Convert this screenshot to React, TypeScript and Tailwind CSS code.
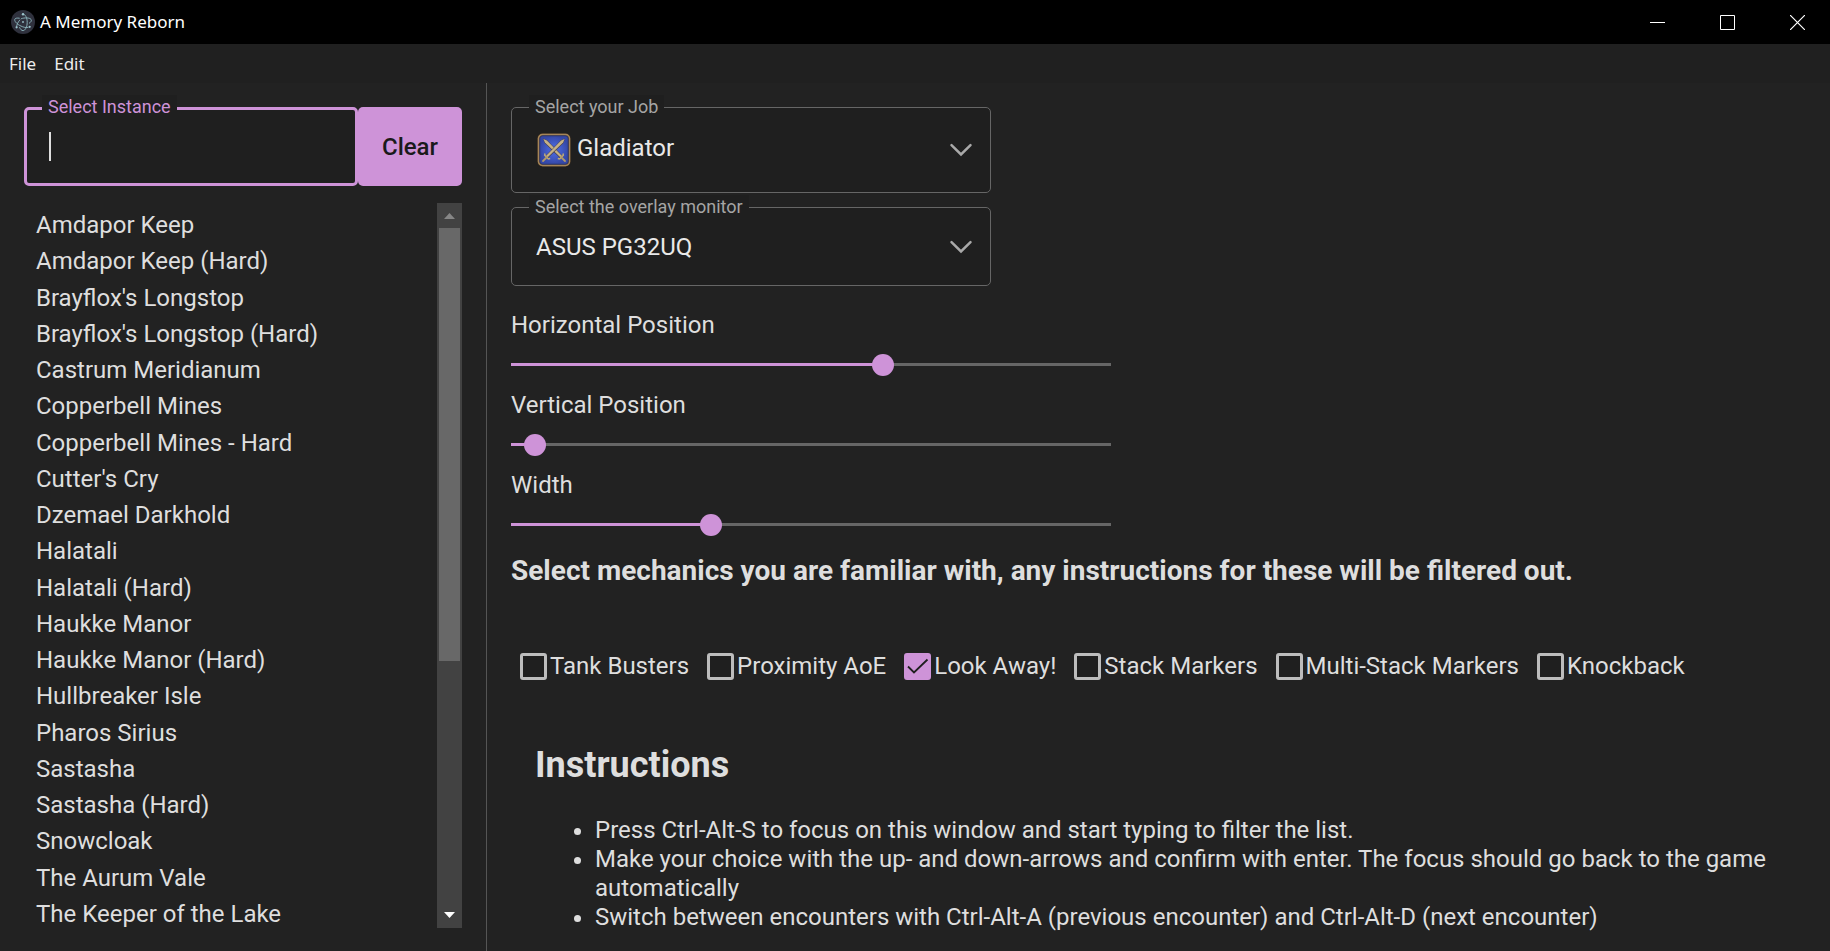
import { useState, type ReactNode } from "react";

const instances = [
  "Amdapor Keep",
  "Amdapor Keep (Hard)",
  "Brayflox's Longstop",
  "Brayflox's Longstop (Hard)",
  "Castrum Meridianum",
  "Copperbell Mines",
  "Copperbell Mines - Hard",
  "Cutter's Cry",
  "Dzemael Darkhold",
  "Halatali",
  "Halatali (Hard)",
  "Haukke Manor",
  "Haukke Manor (Hard)",
  "Hullbreaker Isle",
  "Pharos Sirius",
  "Sastasha",
  "Sastasha (Hard)",
  "Snowcloak",
  "The Aurum Vale",
  "The Keeper of the Lake",
];

const mechanics = [
  { name: "Tank Busters", known: false },
  { name: "Proximity AoE", known: false },
  { name: "Look Away!", known: true },
  { name: "Stack Markers", known: false },
  { name: "Multi-Stack Markers", known: false },
  { name: "Knockback", known: false },
];

function ElectronIcon() {
  return (
    <svg viewBox="0 0 24 24" className="size-6 shrink-0" aria-hidden="true">
      <circle cx="12" cy="12" r="12" fill="#2f313d" />
      <g fill="none" stroke="#8fb8c0" strokeWidth="0.9" strokeLinecap="round">
        <path d="M8.3 8.2C5.9 7.8 4.2 8.2 3.8 9.3c-.6 1.600 1.500 4.200 5 6.200 3.200 1.800 6.600 2.500 8.300 1.900" />
        <path d="M10.500 8.600c.7-.2 1.500-.4 2.300-.5 3.900-.6 7.100.2 7.500 1.900.3 1-.5 2.200-2 3.200" />
        <path d="M5.600 17.300c-.2-2 1-4.800 3.200-7.300" />
        <path d="M8.600 17.500c.8 1.900 2 3.100 3.400 3.100 2.300 0 4.200-3.700 4.200-8.300 0-4.500-1.700-7.900-4-8.200" />
      </g>
      <g fill="#9cc4cc">
        <circle cx="12" cy="12" r="0.9" />
        <circle cx="12" cy="4.300" r="1.200" />
        <circle cx="5.600" cy="17.300" r="1.100" />
        <circle cx="18.700" cy="16.800" r="1.100" />
      </g>
    </svg>
  );
}

function Sword() {
  return (
    <g>
      <path d="M6 5.600l4.200 1.700L26.300 23.800l-2.300 2.300L7.600 10z" fill="#4d4040" />
      <path d="M6.400 6l3.500 1.600L25.300 23.200l-1.500 1.500L7.900 9.500z" fill="#c4b189" />
      <path d="M20.800 25.600l1.800.4 3.700-3.800-.3-1.700" fill="none" stroke="#bda878" strokeWidth="1.500" />
      <path d="M24 24l4 4" stroke="#b09a6c" strokeWidth="1.800" strokeLinecap="round" />
    </g>
  );
}

function GladiatorIcon() {
  return (
    <svg viewBox="0 0 34 34" className="size-[34px]" aria-hidden="true">
      <defs>
        <radialGradient id="glow">
          <stop offset="0.400" stopColor="#4660cf" />
          <stop offset="1" stopColor="#3548a8" />
        </radialGradient>
      </defs>
      <rect x="0.500" y="0.500" width="33" height="33" rx="5" fill="#5f452b" />
      <rect x="1.500" y="1.500" width="31" height="31" rx="4" fill="none" stroke="#a58659" strokeWidth="1.400" />
      <rect x="2.800" y="2.800" width="28.400" height="28.400" rx="3" fill="url(#glow)" stroke="#2c3566" strokeWidth="0.800" />
      <Sword />
      <g transform="matrix(-1 0 0 1 34 0)">
        <Sword />
      </g>
    </svg>
  );
}

type SelectFieldProps = { id: string; label: string; value: string; tall?: boolean; icon?: ReactNode };

function SelectField({ id, label, value, tall, icon }: SelectFieldProps) {
  return (
    <div className="relative flex w-[480px] rounded-[5px] border border-[#666666] bg-[#1f1f1f]">
      <label htmlFor={id} className="absolute -top-[13px] left-[17px] bg-[#1f1f1f] px-1.5 text-lg leading-6 text-[#a5a5a5]">
        {label}
      </label>
      {icon && <span className="pointer-events-none absolute top-[25px] left-[25px]">{icon}</span>}
      <select
        id={id}
        className={
          tall
            ? "w-full appearance-none rounded-[5px] bg-transparent pt-[26px] pb-[30px] pl-[65px] text-2xl leading-7 text-[#e9e9e9] outline-none"
            : "w-full appearance-none rounded-[5px] bg-transparent pt-[25px] pb-6 pl-6 text-2xl leading-7 text-[#e9e9e9] outline-none"
        }
      >
        <option>{value}</option>
      </select>
      <svg
        viewBox="0 0 24 14"
        className="pointer-events-none absolute inset-y-0 right-[17px] my-auto h-3.5 w-6"
        fill="none"
        stroke="#a9a9a9"
        strokeWidth="2.500"
        strokeLinecap="round"
        aria-hidden="true"
      >
        <path d="M2.500 2.200L12 11.500l9.500-9.300" />
      </svg>
    </div>
  );
}

function Slider({ id, label, initial }: { id: string; label: string; initial: number }) {
  const [value, setValue] = useState(initial);
  return (
    <div className="flex h-20 w-[600px] flex-col">
      <label htmlFor={id} className="text-2xl leading-7">
        {label}
      </label>
      <div className="relative mt-6 h-[3px] bg-[#666666]">
        <div className="h-full bg-[#ce93d8]" style={{ width: `${value}%` }} />
        <input
          id={id}
          type="range"
          min={0}
          max={100}
          step="any"
          value={value}
          onChange={(e) => setValue(Number(e.target.value))}
          className="absolute -top-[9px] -left-[11px] h-[22px] w-[622px] cursor-pointer appearance-none bg-transparent outline-none [&::-webkit-slider-thumb]:size-[22px] [&::-webkit-slider-thumb]:appearance-none [&::-webkit-slider-thumb]:rounded-full [&::-webkit-slider-thumb]:bg-[#ce93d8]"
        />
      </div>
    </div>
  );
}

function Mechanic({ name, known }: { name: string; known: boolean }) {
  return (
    <label className="flex items-center gap-[3px] text-2xl leading-7">
      <span className="relative flex">
        <input
          type="checkbox"
          defaultChecked={known}
          className="peer size-[27px] appearance-none rounded-[3px] border-3 border-[#bdbdbd] bg-[#1f1f1f] checked:border-[#ce93d8] checked:bg-[#ce93d8]"
        />
        <svg
          viewBox="0 0 27 27"
          className="pointer-events-none absolute inset-0 hidden size-[27px] peer-checked:block"
          fill="none"
          stroke="#1f1f1f"
          strokeWidth="1.800"
          aria-hidden="true"
        >
          <path d="M4 13.500l6 6L23.500 6.500" />
        </svg>
      </span>
      {name}
    </label>
  );
}

export default function App() {
  const [query, setQuery] = useState("");
  return (
    <div className="flex min-h-screen flex-col bg-[#222222] font-[Roboto,sans-serif] text-[#dedede]">
      <header className="flex h-11 items-center bg-black pl-[11px] font-['Noto_Sans',sans-serif] text-white">
        <ElectronIcon />
        <h1 className="ml-[5px] flex-1 text-[17px] leading-6">A Memory Reborn</h1>
        <button aria-label="Minimize" className="flex h-full w-[70px] items-center justify-center pl-1">
          <svg viewBox="0 0 15 15" className="size-[15px]" stroke="white" aria-hidden="true">
            <path d="M0 7.500h15" />
          </svg>
        </button>
        <button aria-label="Maximize" className="flex h-full w-[70px] items-center justify-center pl-1">
          <svg viewBox="0 0 15 15" className="size-[15px]" fill="none" stroke="white" aria-hidden="true">
            <path d="M.5.5h14v14H.5z" />
          </svg>
        </button>
        <button aria-label="Close" className="flex h-full w-[70px] items-center justify-center pl-1">
          <svg viewBox="0 0 15 15" className="size-[15px]" stroke="white" strokeWidth="1.200" aria-hidden="true">
            <path d="M0 0l15 15M15 0L0 15" />
          </svg>
        </button>
      </header>
      <nav className="flex h-[39px] items-center gap-[18px] bg-[#202020] pl-[9px] font-['Noto_Sans',sans-serif] text-[17px] leading-6 text-[#ededed]">
        <button>File</button>
        <button>Edit</button>
      </nav>
      <div className="flex flex-1">
        <aside className="flex w-[487px] shrink-0 flex-col border-r border-[#555555] px-6 pt-6 pb-[23px]">
          <div className="flex h-[79px]">
            <div className="relative flex flex-1">
              <label
                htmlFor="instance"
                className="absolute -top-3 left-[18px] bg-[#1f1f1f] px-1.5 text-lg leading-6 text-[#ce93d8]"
              >
                Select Instance
              </label>
              <input
                id="instance"
                type="text"
                value={query}
                onChange={(e) => setQuery(e.target.value)}
                className="w-full rounded-[5px] border-3 border-[#ce93d8] bg-[#1f1f1f] px-[22px] text-2xl caret-transparent outline-none"
              />
              <span className="pointer-events-none absolute top-[25px] left-[25px] h-[29px] w-0.5 bg-[#dedede]" />
            </div>
            <button
              onClick={() => setQuery("")}
              className="w-[104px] rounded-[5px] bg-[#ce93d8] text-2xl font-medium text-[#1a1a1a]"
            >
              Clear
            </button>
          </div>
          <div className="mt-[17px] flex flex-1">
            <ul className="-mb-1 grid flex-1 auto-rows-fr pt-1 pl-3 text-2xl leading-9">
              {instances.map((name) => (
                <li key={name} className="flex items-center">
                  {name}
                </li>
              ))}
            </ul>
            <div className="flex w-[25px] flex-col items-center bg-[#424242]" aria-hidden="true">
              <svg viewBox="0 0 25 25" className="size-[25px]" fill="#868686">
                <path d="M7 16l5.500-6 5.500 6z" />
              </svg>
              <div className="w-[21px] grow-[433] bg-[#686868]" />
              <div className="grow-[242]" />
              <svg viewBox="0 0 25 25" className="size-[25px]" fill="#ffffff">
                <path d="M7 9l5.500 6 5.500-6z" />
              </svg>
            </div>
          </div>
        </aside>
        <main className="min-w-0 flex-1 px-6 pt-6">
          <div className="flex flex-col gap-3.5">
            <SelectField id="job" label="Select your Job" value="Gladiator" tall icon={<GladiatorIcon />} />
            <SelectField id="monitor" label="Select the overlay monitor" value="ASUS PG32UQ" />
          </div>
          <div className="mt-[25px]">
            <Slider id="horizontal" label="Horizontal Position" initial={62} />
            <Slider id="vertical" label="Vertical Position" initial={4} />
            <Slider id="width" label="Width" initial={33.3} />
          </div>
          <h3 className="mt-1 text-[28px] leading-8 font-bold">
            Select mechanics you are familiar with, any instructions for these will be filtered out.
          </h3>
          <div className="mt-[65px] flex flex-wrap gap-x-[18px] pl-[9px]">
            {mechanics.map((m) => (
              <Mechanic key={m.name} name={m.name} known={m.known} />
            ))}
          </div>
          <section className="mt-16 px-6">
            <h2 className="text-4xl leading-[42px] font-bold">Instructions</h2>
            <ul className="mt-[30px] list-disc pl-[60px] text-2xl leading-[29px]">
              <li>Press Ctrl-Alt-S to focus on this window and start typing to filter the list.</li>
              <li>
                Make your choice with the up- and down-arrows and confirm with enter. The focus should go back to the
                game automatically
              </li>
              <li>Switch between encounters with Ctrl-Alt-A (previous encounter) and Ctrl-Alt-D (next encounter)</li>
            </ul>
          </section>
        </main>
      </div>
    </div>
  );
}
